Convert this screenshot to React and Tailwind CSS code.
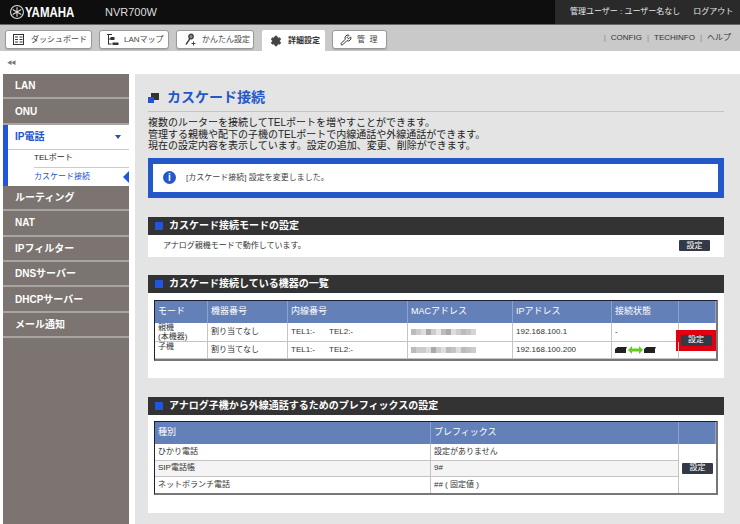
import React from 'react';
import { Settings, Wrench } from 'lucide-react';

const font = { fontFamily: '"Liberation Sans", "Noto Sans CJK JP", sans-serif' };

const navTop = ['LAN', 'ONU'];
const navBottom = ['ルーティング', 'NAT', 'IPフィルター', 'DNSサーバー', 'DHCPサーバー', 'メール通知'];

function DashIcon() {
  return (
    <svg className="shrink-0" width="11" height="11" viewBox="0 0 11 11" fill="none" stroke="#333" strokeWidth="1">
      <rect x="0.5" y="0.5" width="10" height="10" />
      <path d="M2 3h3M2 5.5h3M2 8h3M6.5 3h3M6.5 5.5h3M6.5 8h3" />
    </svg>
  );
}

function MapIcon() {
  return (
    <svg className="shrink-0" width="12" height="13" viewBox="0 0 12 13" fill="none" stroke="#333" strokeWidth="1">
      <path d="M1.5 1v10.5M0 1.5h5M1.5 6h3M1.5 11h3" />
      <rect x="4" y="4.5" width="3" height="2" fill="#333" />
      <rect x="6" y="10" width="5" height="1.5" fill="#333" />
    </svg>
  );
}

function WizardIcon() {
  return (
    <svg className="shrink-0" width="13" height="13" viewBox="0 0 13 13" fill="none" stroke="#444" strokeWidth="1.4">
      <circle cx="7" cy="3.5" r="2.2" fill="#888" />
      <path d="M6 5.5L2 11.5" />
      <path d="M9.5 8.5v4M7.5 10.5h4" strokeWidth="1" />
    </svg>
  );
}

function Tab({ icon, label, width, gap, pad }) {
  return (
    <div className={`h-[19px] mt-[5px] ${width} ${gap} ${pad} bg-white border border-[#999] rounded-[3px] flex items-center text-[8px] text-[#444] shadow-[0_1px_1px_#aaa]`}>
      {icon}
      <span className="whitespace-pre">{label}</span>
    </div>
  );
}

function NavItem({ label }) {
  return (
    <div className="h-[25.4px] bg-[#7b7470] border-b-[2px] border-[#a8a4a1] flex items-center pl-[12px] text-[10px] font-bold text-white">
      {label}
    </div>
  );
}

function SectionHead({ title }) {
  return (
    <div className="h-[18px] bg-[#333333] flex items-center pl-[7px] gap-[6px] text-[10px] font-bold text-white">
      <span className="w-[8px] h-[8px] bg-[#1f55e0] shrink-0" />
      <span>{title}</span>
    </div>
  );
}

function SetButton() {
  return (
    <div className="w-[31px] h-[11px] bg-[#333a45] rounded-[1px] flex items-center justify-center text-[8px] text-white">
      設定
    </div>
  );
}

// 伏せ字になっている MAC アドレス
function BlurredMac({ shades }) {
  return (
    <div className="flex h-[6px]">
      {shades.map((c, i) => (
        <span key={i} className="w-[5px] h-[6px]" style={{ backgroundColor: c }} />
      ))}
    </div>
  );
}

function Router() {
  return (
    <svg width="12" height="6" viewBox="0 0 12 6">
      <path d="M0 2L2.5 0H12L11 2V6H0Z" fill="#222" />
    </svg>
  );
}

const th = 'bg-[#6380b8] border-r border-[#8ea3cc] text-left font-normal text-[9px] text-white pl-[3px] align-middle';
const td = 'border-r border-b border-[#c4c4c4] pl-[3px] text-[8px] text-[#333] align-middle';

export default function App() {
  return (
    <div className="w-[740px] h-[524px] overflow-hidden bg-white flex flex-col" style={font}>
      {/* header */}
      <div className="h-[25px] bg-[#0e0e0e] border-b border-[#666] flex items-stretch text-white shrink-0">
        <div className="w-[105px] flex items-center pl-[10px] gap-[1px]">
          <svg className="shrink-0" width="14" height="14" viewBox="0 0 13 13" fill="none" stroke="#ddd" strokeWidth="1">
            <circle cx="6.5" cy="6.5" r="6" />
            <path d="M6.5 2v9M2.5 4.2l8 4.6M2.5 8.8l8-4.6" />
          </svg>
          <span className="text-[14px] font-bold scale-x-[0.82] origin-left">YAMAHA</span>
        </div>
        <div className="flex-1 flex items-center text-[11px] text-[#ddd]">NVR700W</div>
        <div className="w-[185px] bg-[#2a2a2a] flex items-center pl-[15px] gap-[13px] text-[8px] text-[#e8e8e8] whitespace-nowrap">
          <span>管理ユーザー : ユーザー名なし</span>
          <span>ログアウト</span>
        </div>
      </div>

      {/* tabs */}
      <div className="h-[26px] bg-[#c9c9c9] flex pl-[5px] shrink-0">
        <div className="flex">
          <Tab icon={<DashIcon />} label="ダッシュボード" width="w-[87px]" gap="gap-[7px]" pad="pl-[7px]" />
          <div className="w-[7px]" />
          <Tab icon={<MapIcon />} label="LANマップ" width="w-[70px]" gap="gap-[5px]" pad="pl-[7px]" />
          <div className="w-[7px]" />
          <Tab icon={<WizardIcon />} label="かんたん設定" width="w-[78px]" gap="gap-[5px]" pad="pl-[7px]" />
          <div className="w-[8px]" />
          <div className="h-[21px] mt-[5px] w-[63px] bg-white rounded-t-[2px] flex items-center pl-[8px] gap-[6px] text-[8px] font-bold text-[#333] whitespace-nowrap">
            <Settings className="shrink-0" size={12} fill="#444" stroke="#444" />
            <span>詳細設定</span>
          </div>
          <div className="w-[7px]" />
          <Tab icon={<Wrench className="shrink-0" size={12} stroke="#333" />} label="管  理" width="w-[55px]" gap="gap-[5px]" pad="pl-[7px]" />
        </div>
        <div className="ml-auto flex items-center pr-[9px] gap-[5px] text-[8px] text-[#333]">
          <span className="text-[#888]">|</span>
          <span>CONFIG</span>
          <span className="text-[#888]">|</span>
          <span>TECHINFO</span>
          <span className="text-[#888]">|</span>
          <span>ヘルプ</span>
        </div>
      </div>

      {/* collapse */}
      <div className="h-[23px] pl-[7px] pt-[8px] text-[5px] leading-[6px] text-[#777] tracking-[-1px] shrink-0">◀◀</div>

      <div className="flex-1 flex min-h-0">
        {/* sidebar */}
        <div className="w-[126px] ml-[3px] bg-[#7b7470] shrink-0">
          {navTop.map((n) => (
            <NavItem key={n} label={n} />
          ))}
          <div className="bg-white border-l-[5px] border-[#2255dd]">
            <div className="h-[25px] flex items-center pl-[7px] pr-[8px] justify-between text-[10px] font-bold text-[#2255cc] border-b border-[#ccc]">
              <span>IP電話</span>
              <span className="w-0 h-0 border-l-[3px] border-r-[3px] border-t-[4px] border-l-transparent border-r-transparent border-t-[#2255aa]" />
            </div>
            <div className="ml-[26px] h-[18px] flex items-center text-[8px] text-[#222] border-b border-[#ccc]">TELポート</div>
            <div className="ml-[26px] h-[18px] flex items-center justify-between text-[8px] text-[#2255cc]">
              <span>カスケード接続</span>
              <span className="w-0 h-0 border-t-[6px] border-b-[6px] border-r-[6px] border-t-transparent border-b-transparent border-r-[#2255dd]" />
            </div>
          </div>
          {navBottom.map((n) => (
            <NavItem key={n} label={n} />
          ))}
        </div>

        {/* main */}
        <div className="ml-[6px] flex-1 bg-[#e4e4e4] pl-[13px] pr-[16px] min-w-0">
          <div className="h-[38px] border-b border-[#c4c4c4] flex items-center gap-[8px] pt-[9px]">
            <svg className="shrink-0" width="11" height="11" viewBox="0 0 11 11">
              <rect x="3" y="1" width="8" height="7" fill="#333" />
              <rect x="0" y="5" width="6" height="6" fill="#2255cc" />
            </svg>
            <h1 className="text-[14px] font-bold text-[#2458c8] leading-none">カスケード接続</h1>
          </div>
          <div className="mt-[5px] text-[10px] leading-[11.5px] text-[#222]">
            <p>複数のルーターを接続してTELポートを増やすことができます。</p>
            <p>管理する親機や配下の子機のTELポートで内線通話や外線通話ができます。</p>
            <p>現在の設定内容を表示しています。設定の追加、変更、削除ができます。</p>
          </div>

          <div className="mt-[6px] h-[40px] bg-white border-[6px] border-l-[5px] border-[#2458c8] flex items-center pl-[10px] gap-[10px] text-[8px] text-[#444]">
            <span className="w-[13px] h-[13px] rounded-full bg-[#2458c8] text-white text-[10px] font-bold flex items-center justify-center shrink-0">i</span>
            <span>[カスケード接続] 設定を変更しました。</span>
          </div>

          <div className="mt-[19px]">
            <SectionHead title="カスケード接続モードの設定" />
            <div className="h-[22px] bg-white flex items-center justify-between pl-[15px] pr-[14px] text-[8px] text-[#333]">
              <span>アナログ親機モードで動作しています。</span>
              <SetButton />
            </div>
          </div>

          <div className="mt-[18px]">
            <SectionHead title="カスケード接続している機器の一覧" />
            <div className="bg-white h-[85px] pt-[7px] px-[6px]">
              <table className="w-[564px] table-fixed border-separate border-spacing-0 border-t border-l border-[#1c2030] border-r-2 border-b-2 border-r-[#777] border-b-[#777]">
                <thead>
                  <tr className="h-[22px]">
                    <th className={`${th} w-[53px]`}>モード</th>
                    <th className={`${th} w-[80px]`}>機器番号</th>
                    <th className={`${th} w-[120px]`}>内線番号</th>
                    <th className={`${th} w-[105px]`}>MACアドレス</th>
                    <th className={`${th} w-[99px]`}>IPアドレス</th>
                    <th className={`${th} w-[67px]`}>接続状態</th>
                    <th className={th} />
                  </tr>
                </thead>
                <tbody>
                  <tr className="h-[19px]">
                    <td className={`${td} leading-[9px]`}>親機<br />(本機器)</td>
                    <td className={td}>割り当てなし</td>
                    <td className={td}><span className="mr-[14px]">TEL1:-</span>TEL2:-</td>
                    <td className={td}><BlurredMac shades={['#bbb', '#ccc', '#ddd', '#aaa', '#ccc', '#e4e4e4', '#bbb', '#aaa', '#ddd', '#ccc', '#bbb', '#c4c4c4', '#d4d4d4']} /></td>
                    <td className={td}>192.168.100.1</td>
                    <td className={td}>-</td>
                    <td rowSpan={2} className="border-b border-[#c4c4c4] align-middle p-0">
                      <div className="w-[40px] h-[21px] -ml-[3px] bg-[#e00010] flex items-center justify-center">
                        <SetButton />
                      </div>
                    </td>
                  </tr>
                  <tr className="h-[17px]">
                    <td className={`${td} leading-[9px] align-top`}>子機</td>
                    <td className={td}>割り当てなし</td>
                    <td className={td}><span className="mr-[14px]">TEL1:-</span>TEL2:-</td>
                    <td className={td}><BlurredMac shades={['#bbb', '#ccc', '#ccc', '#ddd', '#aaa', '#ccc', '#ddd', '#bbb', '#c4c4c4', '#ddd', '#bbb', '#c4c4c4', '#ccc']} /></td>
                    <td className={td}>192.168.100.200</td>
                    <td className={td}>
                      <div className="flex items-center gap-[1px]">
                        <Router />
                        <svg width="15" height="8" viewBox="0 0 15 8">
                          <path d="M0 4L4 0V2.5H11V0L15 4L11 8V5.5H4V8Z" fill="#66cc22" />
                        </svg>
                        <Router />
                      </div>
                    </td>
                  </tr>
                </tbody>
              </table>
            </div>
          </div>

          <div className="mt-[19px]">
            <SectionHead title="アナログ子機から外線通話するためのプレフィックスの設定" />
            <div className="bg-white h-[98px] pt-[6px] px-[6px]">
              <table className="w-[564px] table-fixed border-separate border-spacing-0 border-t border-l border-[#1c2030] border-r-2 border-b-2 border-r-[#777] border-b-[#777]">
                <thead>
                  <tr className="h-[22px]">
                    <th className={`${th} w-[276px]`}>種別</th>
                    <th className={`${th} w-[248px]`}>プレフィックス</th>
                    <th className={th} />
                  </tr>
                </thead>
                <tbody>
                  <tr className="h-[17px]">
                    <td className={td}>ひかり電話</td>
                    <td className={td}>設定がありません</td>
                    <td rowSpan={3} className="align-middle pl-[3px]">
                      <SetButton />
                    </td>
                  </tr>
                  <tr className="h-[16px] bg-[#f4f4f4]">
                    <td className={td}>SIP電話帳</td>
                    <td className={td}>9#</td>
                  </tr>
                  <tr className="h-[16px]">
                    <td className={`${td} border-b-0`}>ネットボランチ電話</td>
                    <td className={`${td} border-b-0`}>## ( 固定値 )</td>
                  </tr>
                </tbody>
              </table>
            </div>
          </div>
        </div>
      </div>
    </div>
  );
}
